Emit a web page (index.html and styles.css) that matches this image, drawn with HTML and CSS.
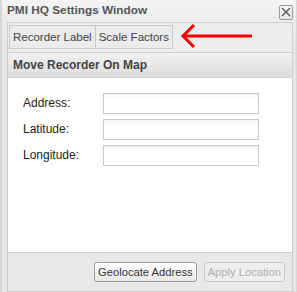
FILE: index.html
```html
<!DOCTYPE html>
<html lang="en">

<head>
    <meta charset="UTF-8">
    <title>PMI HQ Settings Window</title>
    <link rel="stylesheet" href="styles.css">
</head>

<body>
    <div class="window">
        <div class="titlebar">
            <span class="title">PMI HQ Settings Window</span>
            <span class="close">
                <svg width="10" height="10" viewBox="0 0 10 10">
                    <path d="M1 1 L9 9 M9 1 L1 9" stroke="#555" stroke-width="1.4" fill="none" />
                </svg>
            </span>
        </div>
        <div class="frame">
            <div class="tabs">
                <div class="tab">Recorder Label</div>
                <div class="tab">Scale Factors</div>
            </div>
            <div class="panel">
                <div class="panel-header">Move Recorder On Map</div>
                <div class="panel-body">
                    <div class="row"><label>Address:</label><input type="text"></div>
                    <div class="row"><label>Latitude:</label><input type="text"></div>
                    <div class="row"><label>Longitude:</label><input type="text"></div>
                </div>
                <div class="panel-footer">
                    <button>Geolocate Address</button>
                    <button disabled>Apply Location</button>
                </div>
            </div>
        </div>
        <svg class="arrow" width="80" height="30" viewBox="0 0 80 30">
            <path d="M4 12 L73 12 M15 1 L4 12 L15 23" stroke="#f00" stroke-width="3" fill="none" />
        </svg>
    </div>
</body>

</html>
```

FILE: styles.css
```css
* {
    box-sizing: border-box;
}

html,
body {
    margin: 0;
    padding: 0;
    background-color: #fff;
    font-family: 'Liberation Sans', Arial, sans-serif;
    font-size: 12px;
    color: #333;
}

.window {
    position: relative;
    width: 297px;
    height: 292px;
    background: linear-gradient(#f4f4f4, #e6e6e6 40px, #e6e6e6);
    border-left: 2px solid #d8d8d8;
    border-right: 1px solid #d8d8d8;
    display: flex;
    flex-direction: column;
}

.titlebar {
    height: 22px;
    display: flex;
    align-items: center;
    justify-content: space-between;
    padding: 0 3px 0 5px;
}

.title {
    font-weight: bold;
    font-size: 11.8px;
    color: #555;
    margin-top: -2px;
}

.close {
    width: 14px;
    height: 15px;
    border: 1px solid #999;
    border-radius: 2px;
    background: linear-gradient(#fafafa, #e4e4e4);
    display: flex;
    align-items: center;
    justify-content: center;
    margin-top: 2px;
}

.frame {
    flex: 1;
    margin: 0 3px 0 5px;
    display: flex;
    flex-direction: column;
}

.tabs {
    height: 30px;
    border: 1px solid #d0d0d0;
    border-bottom: none;
    background-color: #ededed;
    display: flex;
    padding: 2px 1px 0;
}

.tab {
    height: 24px;
    line-height: 22px;
    padding: 0 3px;
    border: 1px solid #cacaca;
    background-color: #ebebeb;
    color: #444;
    font-size: 11.5px;
}

.tab + .tab {
    border-left: none;
}

.panel {
    flex: 1;
    border: 1px solid #cfcfcf;
    display: flex;
    flex-direction: column;
}

.panel-header {
    height: 25px;
    line-height: 24px;
    padding-left: 5px;
    font-weight: bold;
    font-size: 12px;
    color: #444;
    background: linear-gradient(#f2f2f2, #dcdcdc);
    border-bottom: 1px solid #d0d0d0;
}

.panel-body {
    flex: 1;
    background-color: #fff;
    padding: 12px 0 0 15px;
    border-bottom: 1px solid #d0d0d0;
}

.row {
    display: flex;
    align-items: center;
    height: 26px;
}

.row label {
    flex: 0 0 80px;
    color: #222;
    font-size: 12px;
}

.row input {
    width: 156px;
    height: 21px;
    border: 1px solid #c8c8c8;
    background: linear-gradient(#f2f2f2, #fff 6px);
    margin: 0;
}

.panel-footer {
    height: 38px;
    background-color: #e8e8e8;
    display: flex;
    align-items: center;
    justify-content: flex-end;
    gap: 7px;
    padding: 0 7px 0 0;
}

button {
    height: 20px;
    padding: 0 3px;
    font-family: 'Liberation Sans', Arial, sans-serif;
    font-size: 11.2px;
    color: #333;
    border: 1px solid #999;
    border-radius: 3px;
    background: linear-gradient(#fff, #e9e9e9);
}

button:disabled {
    color: #b0b0b0;
    border-color: #c8c8c8;
    background: #eee;
}

.arrow {
    position: absolute;
    left: 177px;
    top: 24px;
}
```
